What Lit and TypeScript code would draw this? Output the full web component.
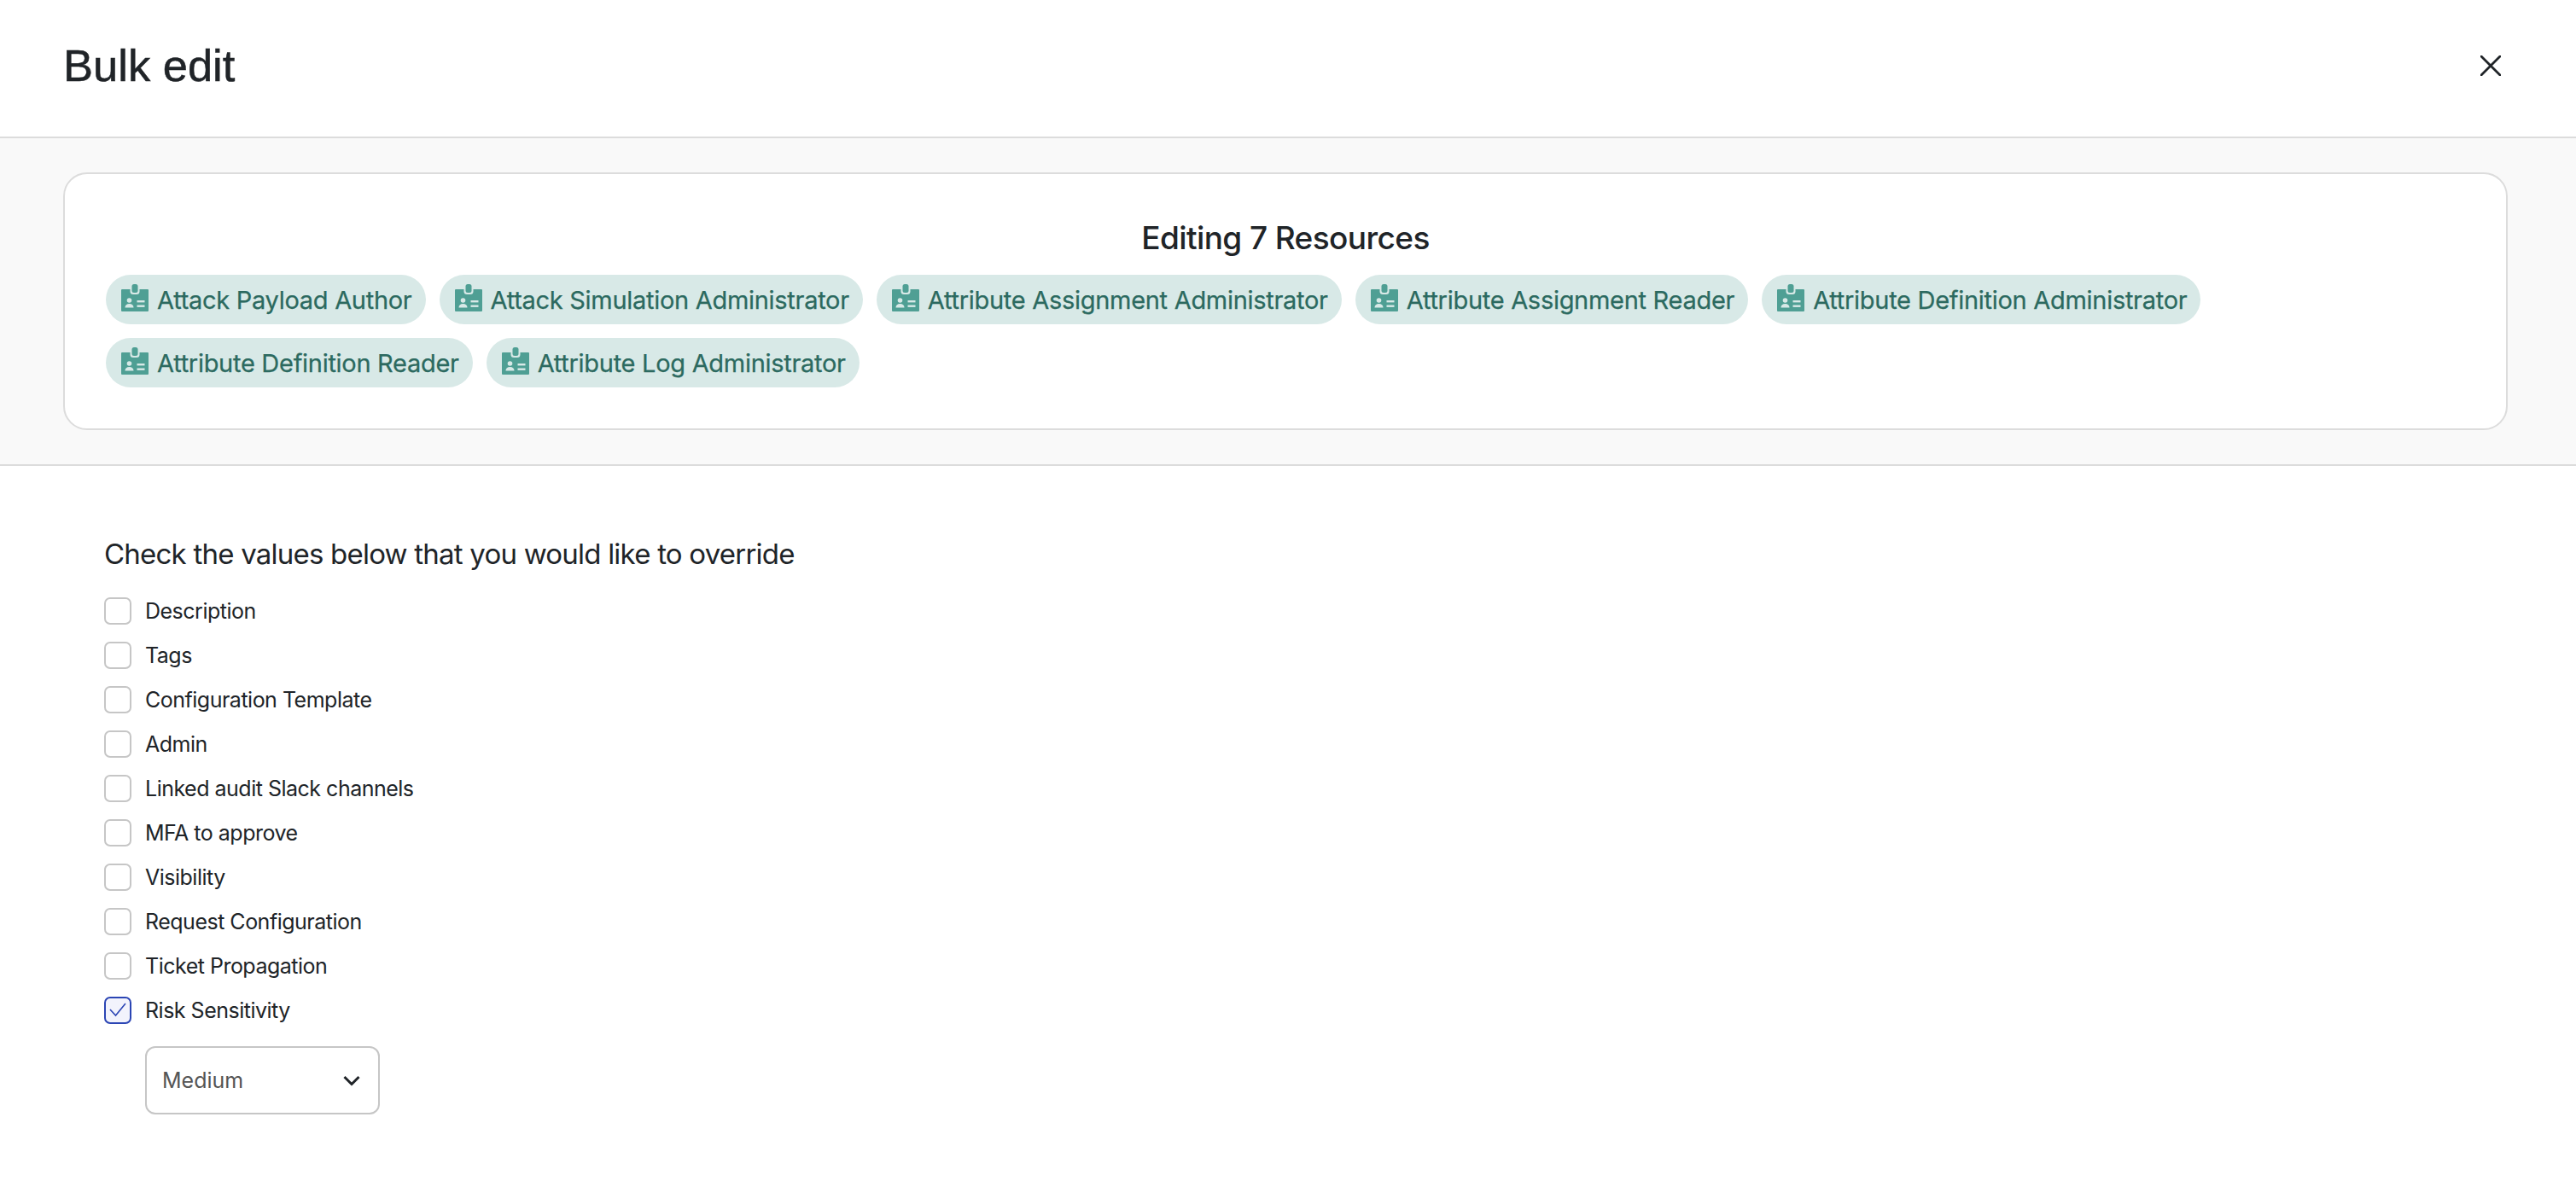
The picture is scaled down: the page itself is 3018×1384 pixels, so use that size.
import { LitElement, html, css } from "lit";
import { customElement } from "lit/decorators.js";

const CHIPS = [
  "Attack Payload Author",
  "Attack Simulation Administrator",
  "Attribute Assignment Administrator",
  "Attribute Assignment Reader",
  "Attribute Definition Administrator",
  "Attribute Definition Reader",
  "Attribute Log Administrator",
];
const FIELDS = [
  "Description",
  "Tags",
  "Configuration Template",
  "Admin",
  "Linked audit Slack channels",
  "MFA to approve",
  "Visibility",
  "Request Configuration",
  "Ticket Propagation",
];

@customElement("app-root")
export class AppRoot extends LitElement {
  static styles = css`
    :host {
      display: block;
      width: 3018px;
      height: 1384px;
      background: #fff;
      color: #202428;
      font-family: "Inter", "Liberation Sans", sans-serif;
      overflow: hidden;
    }
    .header {
      height: 154px;
      box-sizing: content-box;
      border-bottom: 2px solid #dcdcdc;
      display: flex;
      align-items: center;
      justify-content: space-between;
      padding: 0 74px 6px;
    }
    .title {
      font-family: "Liberation Sans", sans-serif;
      font-size: 52.500px;
      font-weight: 400;
      margin: 0;
      padding-bottom: 2px;
      -webkit-text-stroke: 0.5px #202428;
    }
    .close {
      width: 24px;
      height: 24px;
      margin-right: 14px;
      display: block;
    }
    .band {
      background: #f9f9f9;
      border-bottom: 2px solid #dcdcdc;
      padding: 40px 80px 40px 74px;
    }
    .card {
      box-sizing: border-box;
      height: 302px;
      background: #fff;
      border: 2px solid #dcdcdc;
      border-radius: 28px;
      padding: 50px 48px 0;
    }
    .card h2 {
      margin: 0 0 18px;
      text-align: center;
      font-size: 37px;
      line-height: 50px;
      font-weight: 500;
      letter-spacing: -0.6px;
    }
    .chips {
      display: flex;
      flex-wrap: wrap;
      gap: 16px;
    }
    .chip {
      height: 58px;
      border-radius: 29px;
      background: #d8e9e7;
      color: #2c6a60;
      display: flex;
      align-items: center;
      gap: 10px;
      padding: 0 16px 0 18px;
      font-size: 29px;
      font-weight: 400;
      letter-spacing: -0.29px;
      -webkit-text-stroke: 0.25px #2c6a60;
      white-space: nowrap;
    }
    .chip svg {
      width: 32px;
      height: 32px;
      flex: none;
      margin-bottom: 4px;
    }
    .body {
      padding: 81px 122px 0;
    }
    .lead {
      margin: 0 0 19px;
      font-size: 33px;
      line-height: 44px;
      font-weight: 400;
      letter-spacing: -0.78px;
    }
    .row {
      height: 52px;
      display: flex;
      align-items: center;
      gap: 16px;
      font-size: 25px;
      letter-spacing: -0.5px;
    }
    .box {
      box-sizing: border-box;
      width: 32px;
      height: 32px;
      border: 2px solid #c6c6c6;
      border-radius: 7px;
      background: #fff;
      display: flex;
      align-items: center;
      justify-content: center;
    }
    .box.on {
      border-color: #2b45b4;
      background: #f2f3fc;
    }
    .box svg {
      width: 20px;
      height: 20px;
    }
    .select {
      box-sizing: border-box;
      margin: 16px 0 0 48px;
      width: 275px;
      height: 80px;
      border: 2px solid #c6c6c6;
      border-radius: 12px;
      display: flex;
      align-items: center;
      justify-content: space-between;
      padding: 0 21px 0 18px;
      font-size: 25px;
      color: #555;
    }
    .select svg {
      width: 20px;
      height: 13px;
    }
  `;

  private badge() {
    return html`<svg viewBox="0 0 32 32" aria-hidden="true">
      <rect x="0" y="6" width="32" height="26" rx="1" fill="#4f9f94" />
      <rect x="10.500" y="-1" width="11" height="13" rx="3.500" fill="#d8e9e7" />
      <rect x="12.500" y="0" width="7" height="10" rx="2.500" fill="#4f9f94" />
      <circle cx="9.500" cy="19" r="2.800" fill="#d8e9e7" />
      <path fill="#d8e9e7" d="M4.500 27.500C4.500 24.500 6.500 23 9.500 23S14.500 24.500 14.500 27.500Z" />
      <rect x="18.500" y="19" width="9" height="2.400" fill="#d8e9e7" />
      <rect x="18.500" y="24.500" width="9" height="2.400" fill="#d8e9e7" />
    </svg>`;
  }

  render() {
    return html`
      <div class="header">
        <h1 class="title">Bulk edit</h1>
        <svg class="close" viewBox="0 0 24 24" aria-hidden="true">
          <path d="M1 1L23 23M23 1L1 23" stroke="#202428" stroke-width="2.800" stroke-linecap="round" />
        </svg>
      </div>
      <div class="band">
        <div class="card">
          <h2>Editing 7 Resources</h2>
          <div class="chips">
            ${CHIPS.map((c) => html`<div class="chip">${this.badge()}<span>${c}</span></div>`)}
          </div>
        </div>
      </div>
      <div class="body">
        <p class="lead">Check the values below that you would like to override</p>
        ${FIELDS.map((f) => html`<div class="row"><span class="box"></span><span>${f}</span></div>`)}
        <div class="row">
          <span class="box on">
            <svg viewBox="0 0 20 20" aria-hidden="true">
              <path d="M1 9L7.500 16L19 2" fill="none" stroke="#2b45b4" stroke-width="1.600" />
            </svg>
          </span>
          <span>Risk Sensitivity</span>
        </div>
        <div class="select">
          <span>Medium</span>
          <svg viewBox="0 0 20 13" aria-hidden="true">
            <path d="M1.500 2L10 10.500L18.500 2" fill="none" stroke="#202428" stroke-width="3" />
          </svg>
        </div>
      </div>
    `;
  }
}
